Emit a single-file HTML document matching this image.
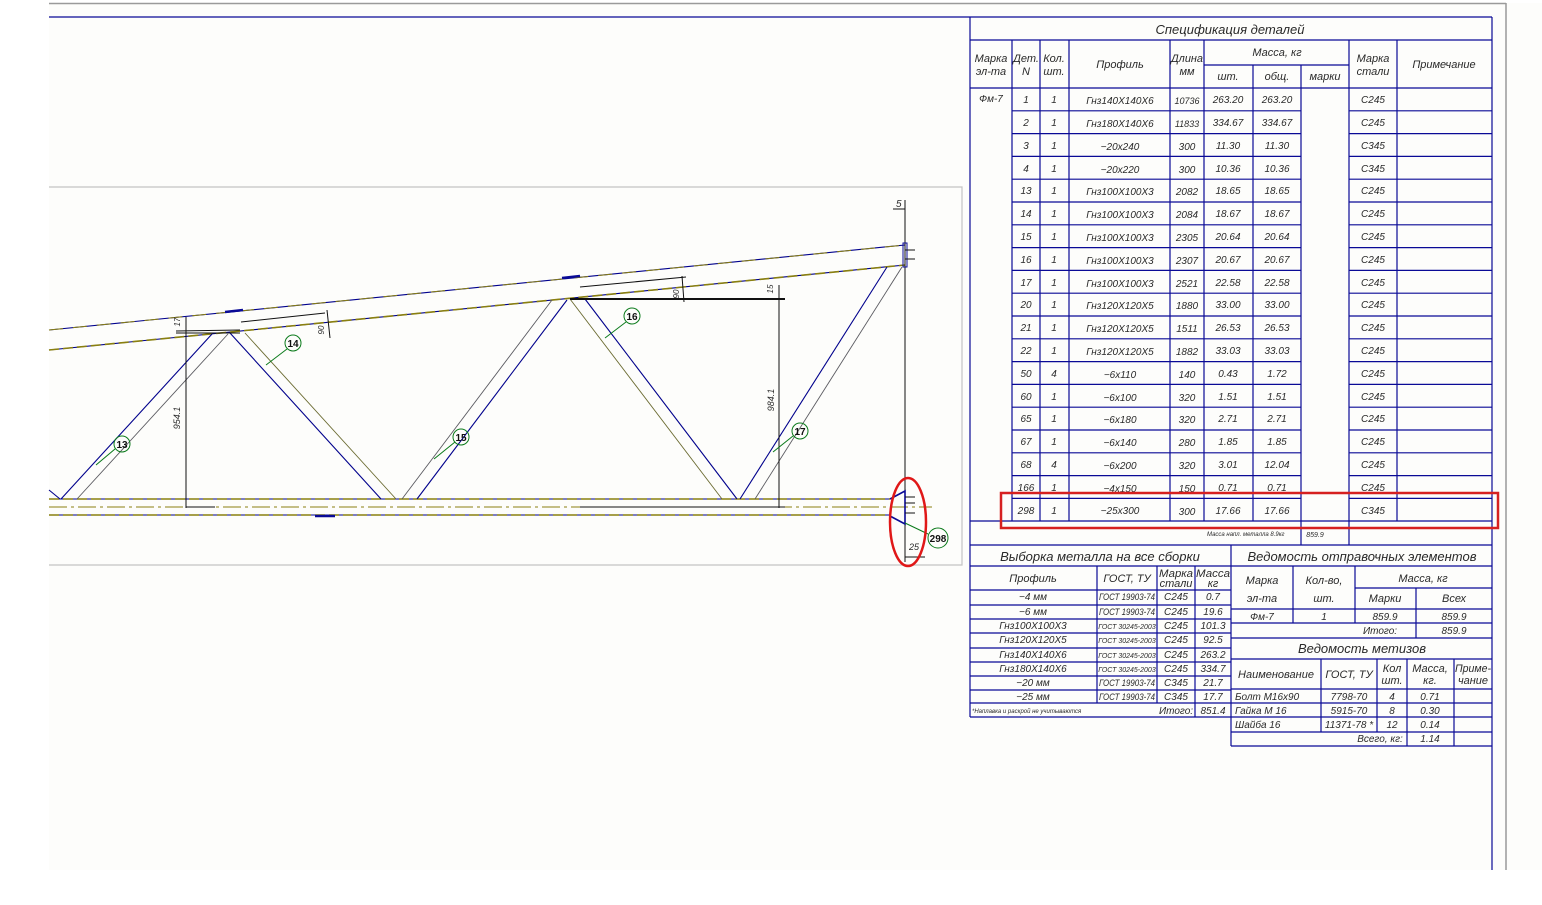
<!DOCTYPE html>
<html><head><meta charset="utf-8"><style>
html,body{margin:0;padding:0;background:#fff;width:1542px;height:905px;overflow:hidden}
svg{display:block}
text{font-family:"Liberation Sans Narrow","Liberation Sans",sans-serif;font-style:italic;fill:#2a2a2a}
.t{font-size:10px;text-anchor:middle}
.h{font-size:11px;text-anchor:middle}
.T{font-size:13px;text-anchor:middle}
.s{font-size:7px}
.b{stroke:#0a0a96;stroke-width:1.2;fill:none}
.g{stroke:#9a9a9a;stroke-width:1.5;fill:none}
.bl{stroke:#00008c;stroke-width:1.1;fill:none}
.ol{stroke:#8a8010;stroke-width:1.6;stroke-dasharray:10 4;fill:none}
.ol1{stroke:#8a8010;stroke-width:0.9;fill:none}
.k{stroke:#111;stroke-width:1;fill:none}
.gr{stroke:#0a7a1a;stroke-width:1;fill:none}
.gt{font-family:"Liberation Sans",sans-serif;font-style:normal;font-size:10px;fill:#111;text-anchor:middle;font-weight:bold}
.n{font-size:9px}
</style></head><body>
<svg width="1542" height="905" viewBox="0 0 1542 905" xmlns="http://www.w3.org/2000/svg">
<rect x="49" y="3" width="1493" height="867" fill="#fdfdfb"/>
<line class="g" x1="49" y1="3.5" x2="1506" y2="3.5"/>
<line class="g" x1="1506" y1="3" x2="1506" y2="870"/>
<line class="b" x1="49" y1="17" x2="1492" y2="17"/>
<line class="b" x1="1492" y1="17" x2="1492" y2="870"/>

<polyline class="g" style="stroke:#c4c4c4;stroke-width:1.2" points="49,187 962,187 962,565 49,565"/>

<!-- top chord -->
<line class="bl" x1="49" y1="330" x2="905" y2="245"/>
<line class="ol" x1="49" y1="330" x2="905" y2="245" style="stroke-width:1;stroke-dasharray:14 10"/>
<line class="bl" x1="49" y1="350" x2="905" y2="265"/>
<line class="ol" x1="49" y1="350" x2="905" y2="265"/>
<!-- bottom chord -->
<line class="bl" x1="49" y1="499" x2="890" y2="499"/>
<line class="ol" x1="49" y1="499" x2="890" y2="499"/>
<line class="ol1" x1="49" y1="507" x2="932" y2="507" style="stroke-dasharray:18 4 3 4"/>
<line class="bl" x1="49" y1="515" x2="890" y2="515"/>
<line class="ol" x1="49" y1="515" x2="890" y2="515"/>
<line x1="315" y1="516" x2="335" y2="516" stroke="#0a0a96" stroke-width="2.5"/>
<line x1="225" y1="312" x2="243" y2="310" stroke="#0a0a96" stroke-width="2.5"/>
<line x1="562" y1="278" x2="580" y2="276" stroke="#0a0a96" stroke-width="2.5"/>

<!-- web members -->
<line class="bl" x1="61" y1="499" x2="212" y2="334"/>
<line class="bl" x1="77" y1="499" x2="228" y2="334" style="stroke:#5a5a60;stroke-width:.9"/>
<line class="bl" x1="230" y1="333" x2="381" y2="499"/>
<line class="bl" x1="245" y1="333" x2="396" y2="499" style="stroke:#6a6a30;stroke-width:.9"/>
<line class="bl" x1="402" y1="499" x2="552" y2="300" style="stroke:#5a5a60;stroke-width:.9"/>
<line class="bl" x1="417" y1="499" x2="567" y2="300"/>
<line class="bl" x1="585" y1="299" x2="737" y2="499"/>
<line class="bl" x1="570" y1="299" x2="722" y2="499" style="stroke:#6a6a30;stroke-width:.9"/>
<line class="bl" x1="740" y1="499" x2="887" y2="267"/>
<line class="bl" x1="755" y1="499" x2="902" y2="267" style="stroke:#5a5a60;stroke-width:.9"/>
<line class="bl" x1="49" y1="490" x2="60" y2="499"/>

<!-- dims -->
<line class="k" x1="186" y1="317" x2="186" y2="508"/>
<line class="k" x1="176" y1="333" x2="240" y2="333"/>
<line class="k" x1="176" y1="331" x2="240" y2="330"/>
<line class="k" x1="186" y1="507" x2="215" y2="507"/>
<text class="s" transform="translate(180,418) rotate(-90)" style="font-size:9px;text-anchor:middle">954.1</text>
<text class="s" transform="translate(180,322) rotate(-90)" style="font-size:8px;text-anchor:middle">17</text>
<line class="k" x1="241" y1="322" x2="325" y2="313"/>
<line class="k" x1="327" y1="310" x2="330" y2="338"/>
<text class="s" transform="translate(324,330) rotate(-90)" style="font-size:8px;text-anchor:middle">90</text>
<line class="k" x1="580" y1="287" x2="686" y2="277"/>
<line x1="570" y1="299" x2="785" y2="299" stroke="#111" stroke-width="2"/>
<line class="k" x1="682" y1="276" x2="684" y2="302"/>
<text class="s" transform="translate(679,294) rotate(-90)" style="font-size:8px;text-anchor:middle">90</text>
<line class="k" x1="779" y1="285" x2="779" y2="508"/>
<text class="s" transform="translate(773,289) rotate(-90)" style="font-size:8px;text-anchor:middle">15</text>
<text class="s" transform="translate(774,400) rotate(-90)" style="font-size:9px;text-anchor:middle">984.1</text>
<line class="k" x1="580" y1="507" x2="785" y2="507"/>
<line class="k" x1="905" y1="200" x2="905" y2="562"/>
<line class="k" x1="893" y1="209" x2="905" y2="209"/>
<text x="896" y="207" style="font-size:10px">5</text>
<rect x="903" y="243" width="4" height="24" fill="none" stroke="#0a0a96"/>
<line class="k" x1="905" y1="250" x2="915" y2="250"/>
<line class="k" x1="905" y1="259" x2="915" y2="259"/>
<line class="k" x1="905" y1="557" x2="925" y2="557"/>
<text x="909" y="550" style="font-size:9px">25</text>
<polyline points="890,499 905,491 905,524 890,516" fill="none" stroke="#0a0a96" stroke-width="1.6"/>
<line class="k" x1="905" y1="497" x2="915" y2="497"/>
<line class="k" x1="905" y1="503" x2="915" y2="503"/>
<line class="k" x1="905" y1="513" x2="915" y2="513"/>

<!-- callouts -->
<g>
<circle class="gr" cx="122" cy="444" r="8"/><text class="gt" x="122" y="448">13</text><line class="gr" x1="115" y1="449" x2="96" y2="465"/>
<circle class="gr" cx="293" cy="343" r="8"/><text class="gt" x="293" y="347">14</text><line class="gr" x1="287" y1="349" x2="266" y2="365"/>
<circle class="gr" cx="461" cy="437" r="8"/><text class="gt" x="461" y="441">15</text><line class="gr" x1="455" y1="442" x2="434" y2="459"/>
<circle class="gr" cx="632" cy="316" r="8"/><text class="gt" x="632" y="320">16</text><line class="gr" x1="626" y1="322" x2="605" y2="338"/>
<circle class="gr" cx="800" cy="431" r="8"/><text class="gt" x="800" y="435">17</text><line class="gr" x1="793" y1="436" x2="773" y2="452"/>
<circle class="gr" cx="938" cy="538" r="10"/><text class="gt" x="938" y="542">298</text><line class="gr" x1="928" y1="534" x2="905" y2="523"/>
</g>
<ellipse cx="908" cy="522" rx="18" ry="44" fill="none" stroke="#e01818" stroke-width="2.5"/>

<!-- SPEC TABLE -->
<g class="b">
<line x1="970" y1="17" x2="970" y2="717"/>
<line x1="970" y1="40" x2="1492" y2="40"/>
<line x1="1204" y1="65" x2="1349" y2="65"/>
<line x1="970" y1="88" x2="1492" y2="88"/>
<line x1="1012" y1="40" x2="1012" y2="521"/>
<line x1="1040" y1="40" x2="1040" y2="521"/>
<line x1="1069" y1="40" x2="1069" y2="521"/>
<line x1="1170" y1="40" x2="1170" y2="521"/>
<line x1="1204" y1="40" x2="1204" y2="521"/>
<line x1="1253" y1="65" x2="1253" y2="521"/>
<line x1="1301" y1="65" x2="1301" y2="545"/>
<line x1="1349" y1="40" x2="1349" y2="545"/>
<line x1="1397" y1="40" x2="1397" y2="521"/>
<path d="M1012 110.8H1301M1349 110.8H1492M1012 133.6H1301M1349 133.6H1492M1012 156.4H1301M1349 156.4H1492M1012 179.2H1301M1349 179.2H1492M1012 202H1301M1349 202H1492M1012 224.8H1301M1349 224.8H1492M1012 247.6H1301M1349 247.6H1492M1012 270.4H1301M1349 270.4H1492M1012 293.2H1301M1349 293.2H1492M1012 316H1301M1349 316H1492M1012 338.8H1301M1349 338.8H1492M1012 361.6H1301M1349 361.6H1492M1012 384.4H1301M1349 384.4H1492M1012 407.2H1301M1349 407.2H1492M1012 430H1301M1349 430H1492M1012 452.8H1301M1349 452.8H1492M1012 475.6H1301M1349 475.6H1492M1012 498.4H1301M1349 498.4H1492"/>
<line x1="970" y1="521" x2="1492" y2="521"/>
<line x1="970" y1="545" x2="1492" y2="545"/>
</g>
<text class="T" x="1230" y="34">Спецификация деталей</text>
<g class="h">
<text x="991" y="62">Марка</text><text x="991" y="75">эл-та</text>
<text x="1026" y="62">Дет.</text><text x="1026" y="75">N</text>
<text x="1054" y="62">Кол.</text><text x="1054" y="75">шт.</text>
<text x="1120" y="68">Профиль</text>
<text x="1187" y="62" textLength="32" lengthAdjust="spacingAndGlyphs">Длина</text><text x="1187" y="75">мм</text>
<text x="1277" y="56">Масса, кг</text>
<text x="1228" y="80">шт.</text><text x="1277" y="80">общ.</text><text x="1325" y="80">марки</text>
<text x="1373" y="62">Марка</text><text x="1373" y="75">стали</text>
<text x="1444" y="68">Примечание</text>
</g>
<g class="t">
<text x="991" y="102">Фм-7</text>
<text x="1026" y="103">1</text><text x="1054" y="103">1</text><text x="1120" y="104">Гнз140X140X6</text><text x="1187" y="104" class="n">10736</text><text x="1228" y="103">263.20</text><text x="1277" y="103">263.20</text><text x="1373" y="103">C245</text>
<text x="1026" y="126">2</text><text x="1054" y="126">1</text><text x="1120" y="127">Гнз180X140X6</text><text x="1187" y="127" class="n">11833</text><text x="1228" y="126">334.67</text><text x="1277" y="126">334.67</text><text x="1373" y="126">C245</text>
<text x="1026" y="149">3</text><text x="1054" y="149">1</text><text x="1120" y="150">−20x240</text><text x="1187" y="150">300</text><text x="1228" y="149">11.30</text><text x="1277" y="149">11.30</text><text x="1373" y="149">C345</text>
<text x="1026" y="172">4</text><text x="1054" y="172">1</text><text x="1120" y="173">−20x220</text><text x="1187" y="173">300</text><text x="1228" y="172">10.36</text><text x="1277" y="172">10.36</text><text x="1373" y="172">C345</text>
<text x="1026" y="194">13</text><text x="1054" y="194">1</text><text x="1120" y="195">Гнз100X100X3</text><text x="1187" y="195">2082</text><text x="1228" y="194">18.65</text><text x="1277" y="194">18.65</text><text x="1373" y="194">C245</text>
<text x="1026" y="217">14</text><text x="1054" y="217">1</text><text x="1120" y="218">Гнз100X100X3</text><text x="1187" y="218">2084</text><text x="1228" y="217">18.67</text><text x="1277" y="217">18.67</text><text x="1373" y="217">C245</text>
<text x="1026" y="240">15</text><text x="1054" y="240">1</text><text x="1120" y="241">Гнз100X100X3</text><text x="1187" y="241">2305</text><text x="1228" y="240">20.64</text><text x="1277" y="240">20.64</text><text x="1373" y="240">C245</text>
<text x="1026" y="263">16</text><text x="1054" y="263">1</text><text x="1120" y="264">Гнз100X100X3</text><text x="1187" y="264">2307</text><text x="1228" y="263">20.67</text><text x="1277" y="263">20.67</text><text x="1373" y="263">C245</text>
<text x="1026" y="286">17</text><text x="1054" y="286">1</text><text x="1120" y="287">Гнз100X100X3</text><text x="1187" y="287">2521</text><text x="1228" y="286">22.58</text><text x="1277" y="286">22.58</text><text x="1373" y="286">C245</text>
<text x="1026" y="308">20</text><text x="1054" y="308">1</text><text x="1120" y="309">Гнз120X120X5</text><text x="1187" y="309">1880</text><text x="1228" y="308">33.00</text><text x="1277" y="308">33.00</text><text x="1373" y="308">C245</text>
<text x="1026" y="331">21</text><text x="1054" y="331">1</text><text x="1120" y="332">Гнз120X120X5</text><text x="1187" y="332">1511</text><text x="1228" y="331">26.53</text><text x="1277" y="331">26.53</text><text x="1373" y="331">C245</text>
<text x="1026" y="354">22</text><text x="1054" y="354">1</text><text x="1120" y="355">Гнз120X120X5</text><text x="1187" y="355">1882</text><text x="1228" y="354">33.03</text><text x="1277" y="354">33.03</text><text x="1373" y="354">C245</text>
<text x="1026" y="377">50</text><text x="1054" y="377">4</text><text x="1120" y="378">−6x110</text><text x="1187" y="378">140</text><text x="1228" y="377">0.43</text><text x="1277" y="377">1.72</text><text x="1373" y="377">C245</text>
<text x="1026" y="400">60</text><text x="1054" y="400">1</text><text x="1120" y="401">−6x100</text><text x="1187" y="401">320</text><text x="1228" y="400">1.51</text><text x="1277" y="400">1.51</text><text x="1373" y="400">C245</text>
<text x="1026" y="422">65</text><text x="1054" y="422">1</text><text x="1120" y="423">−6x180</text><text x="1187" y="423">320</text><text x="1228" y="422">2.71</text><text x="1277" y="422">2.71</text><text x="1373" y="422">C245</text>
<text x="1026" y="445">67</text><text x="1054" y="445">1</text><text x="1120" y="446">−6x140</text><text x="1187" y="446">280</text><text x="1228" y="445">1.85</text><text x="1277" y="445">1.85</text><text x="1373" y="445">C245</text>
<text x="1026" y="468">68</text><text x="1054" y="468">4</text><text x="1120" y="469">−6x200</text><text x="1187" y="469">320</text><text x="1228" y="468">3.01</text><text x="1277" y="468">12.04</text><text x="1373" y="468">C245</text>
<text x="1026" y="491">166</text><text x="1054" y="491">1</text><text x="1120" y="492">−4x150</text><text x="1187" y="492">150</text><text x="1228" y="491">0.71</text><text x="1277" y="491">0.71</text><text x="1373" y="491">C245</text>
<text x="1026" y="514">298</text><text x="1054" y="514">1</text><text x="1120" y="514">−25x300</text><text x="1187" y="515">300</text><text x="1228" y="514">17.66</text><text x="1277" y="514">17.66</text><text x="1373" y="514">C345</text>
</g>
<text x="1207" y="536" style="font-size:6px">Масса напл. металла 8.9кг</text>
<text x="1315" y="537" style="font-size:7px;text-anchor:middle">859.9</text>
<rect x="1001" y="493" width="497" height="35" fill="none" stroke="#d62020" stroke-width="2.5"/>

<!-- bottom-left table -->
<g class="b">
<line x1="1231" y1="545" x2="1231" y2="746"/>
<line x1="970" y1="566" x2="1492" y2="566"/>
<line x1="970" y1="590" x2="1231" y2="590"/>
<line x1="1097" y1="566" x2="1097" y2="703"/>
<line x1="1157" y1="566" x2="1157" y2="703"/>
<line x1="1195" y1="566" x2="1195" y2="717"/>
<path d="M970 605H1231M970 619H1231M970 633H1231M970 648H1231M970 662H1231M970 676H1231M970 690H1231M970 703H1231M970 717H1231"/>
<line x1="1293" y1="566" x2="1293" y2="623"/>
<line x1="1355" y1="566" x2="1355" y2="623"/>
<line x1="1355" y1="588" x2="1492" y2="588"/>
<line x1="1416" y1="588" x2="1416" y2="638"/>
<line x1="1231" y1="609" x2="1492" y2="609"/>
<line x1="1231" y1="623" x2="1492" y2="623"/>
<line x1="1231" y1="638" x2="1492" y2="638"/>
<line x1="1231" y1="659" x2="1492" y2="659"/>
<line x1="1231" y1="689" x2="1492" y2="689"/>
<line x1="1321" y1="659" x2="1321" y2="732"/>
<line x1="1377" y1="659" x2="1377" y2="732"/>
<line x1="1407" y1="659" x2="1407" y2="746"/>
<line x1="1454" y1="659" x2="1454" y2="746"/>
<path d="M1231 703H1492M1231 717H1492M1231 732H1492M1231 746H1492"/>
</g>
<text class="T" x="1100" y="561">Выборка металла на все сборки</text>
<text class="T" x="1362" y="561">Ведомость отправочных элементов</text>
<g class="h">
<text x="1033" y="582">Профиль</text>
<text x="1127" y="582">ГОСТ, ТУ</text>
<text x="1176" y="577" textLength="34" lengthAdjust="spacingAndGlyphs">Марка</text><text x="1176" y="587">стали</text>
<text x="1213" y="577" textLength="34" lengthAdjust="spacingAndGlyphs">Масса</text><text x="1213" y="587">кг</text>
<text x="1262" y="584">Марка</text><text x="1262" y="602">эл-та</text>
<text x="1324" y="584">Кол-во,</text><text x="1324" y="602">шт.</text>
<text x="1423" y="582">Масса, кг</text>
<text x="1385" y="602">Марки</text><text x="1454" y="602">Всех</text>
</g>
<g class="t">
<text x="1033" y="600">−4 мм</text><text x="1127" y="600" class="n" textLength="56" lengthAdjust="spacingAndGlyphs">ГОСТ 19903-74</text><text x="1176" y="600">C245</text><text x="1213" y="600">0.7</text>
<text x="1033" y="615">−6 мм</text><text x="1127" y="615" class="n" textLength="56" lengthAdjust="spacingAndGlyphs">ГОСТ 19903-74</text><text x="1176" y="615">C245</text><text x="1213" y="615">19.6</text>
<text x="1033" y="629">Гнз100X100X3</text><text x="1127" y="629" style="font-size:7px">ГОСТ 30245-2003</text><text x="1176" y="629">C245</text><text x="1213" y="629">101.3</text>
<text x="1033" y="643">Гнз120X120X5</text><text x="1127" y="643" style="font-size:7px">ГОСТ 30245-2003</text><text x="1176" y="643">C245</text><text x="1213" y="643">92.5</text>
<text x="1033" y="658">Гнз140X140X6</text><text x="1127" y="658" style="font-size:7px">ГОСТ 30245-2003</text><text x="1176" y="658">C245</text><text x="1213" y="658">263.2</text>
<text x="1033" y="672">Гнз180X140X6</text><text x="1127" y="672" style="font-size:7px">ГОСТ 30245-2003</text><text x="1176" y="672">C245</text><text x="1213" y="672">334.7</text>
<text x="1033" y="686">−20 мм</text><text x="1127" y="686" class="n" textLength="56" lengthAdjust="spacingAndGlyphs">ГОСТ 19903-74</text><text x="1176" y="686">C345</text><text x="1213" y="686">21.7</text>
<text x="1033" y="700">−25 мм</text><text x="1127" y="700" class="n" textLength="56" lengthAdjust="spacingAndGlyphs">ГОСТ 19903-74</text><text x="1176" y="700">C345</text><text x="1213" y="700">17.7</text>
<text x="1176" y="714">Итого:</text><text x="1213" y="714">851.4</text>
<text x="1262" y="620">Фм-7</text><text x="1324" y="620">1</text><text x="1385" y="620">859.9</text><text x="1454" y="620">859.9</text>
<text x="1380" y="634">Итого:</text><text x="1454" y="634">859.9</text>
<text x="1349" y="700">7798-70</text><text x="1392" y="700">4</text><text x="1430" y="700">0.71</text>
<text x="1349" y="714">5915-70</text><text x="1392" y="714">8</text><text x="1430" y="714">0.30</text>
<text x="1349" y="728">11371-78 *</text><text x="1392" y="728">12</text><text x="1430" y="728">0.14</text>
<text x="1380" y="742">Всего, кг:</text><text x="1430" y="742">1.14</text>
</g>
<text x="972" y="713" style="font-size:6px">*Наплавка и раскрой не учитываются</text>
<g style="font-size:10px">
<text x="1235" y="700">Болт М16х90</text>
<text x="1235" y="714">Гайка М 16</text>
<text x="1235" y="728">Шайба 16</text>
</g>
<text class="T" x="1362" y="653">Ведомость метизов</text>
<g class="h">
<text x="1276" y="678">Наименование</text>
<text x="1349" y="678">ГОСТ, ТУ</text>
<text x="1392" y="672">Кол</text><text x="1392" y="684">шт.</text>
<text x="1430" y="672">Масса,</text><text x="1430" y="684">кг.</text>
<text x="1473" y="672" textLength="36" lengthAdjust="spacingAndGlyphs">Приме-</text><text x="1473" y="684">чание</text>
</g>
</svg>
</body></html>
